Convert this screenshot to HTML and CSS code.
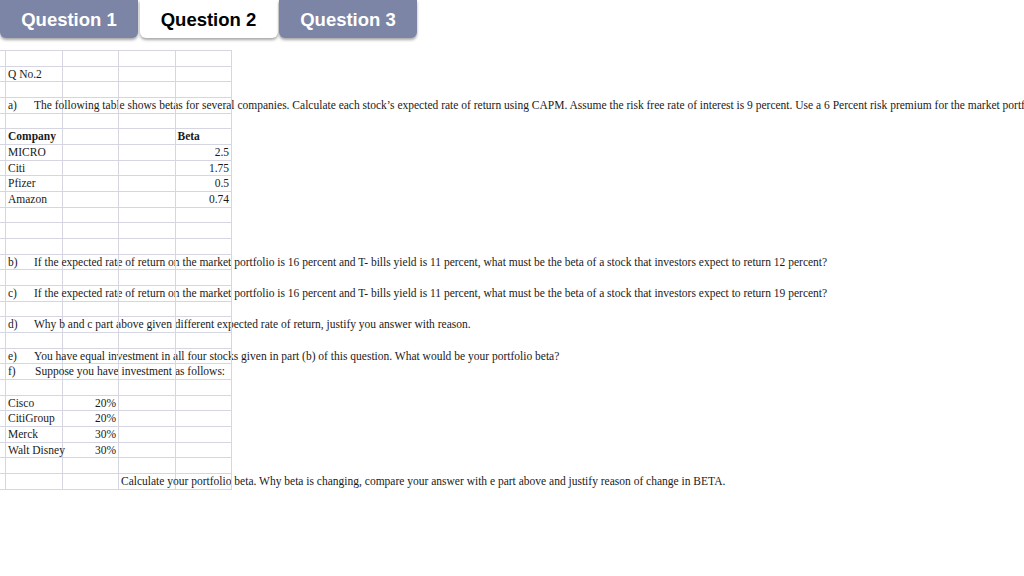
FILE: index.html
```html
<!DOCTYPE html>
<html>
<head>
<meta charset="utf-8">
<link rel="stylesheet" href="styles.css">
</head>
<body>
<div class="tabs">
  <div class="tab">Question 1</div>
  <div class="tab active">Question 2</div>
  <div class="tab">Question 3</div>
</div>
<div class="sheet">
  <div class="row"><div class="c0"></div><div class="c"></div><div class="c"></div><div class="c"></div><div class="c"></div></div>
  <div class="row"><div class="c0"></div><div class="c"><span class="t">Q No.2</span></div><div class="c"></div><div class="c"></div><div class="c"></div></div>
  <div class="row"><div class="c0"></div><div class="c"></div><div class="c"></div><div class="c"></div><div class="c"></div></div>
  <div class="row"><div class="c0"></div><div class="c"><span class="lbl">a)</span><span class="t">The following table shows betas for several companies. Calculate each stock’s expected rate of return using CAPM. Assume the risk free rate of interest is 9 percent. Use a 6 Percent risk premium for the market portfolio.</span></div><div class="c"></div><div class="c"></div><div class="c"></div></div>
  <div class="row"><div class="c0"></div><div class="c"></div><div class="c"></div><div class="c"></div><div class="c"></div></div>
  <div class="row"><div class="c0"></div><div class="c"><span class="t b">Company</span></div><div class="c"></div><div class="c"></div><div class="c"><span class="t b">Beta</span></div></div>
  <div class="row"><div class="c0"></div><div class="c"><span class="t">MICRO</span></div><div class="c"></div><div class="c"></div><div class="c num"><span class="t">2.5</span></div></div>
  <div class="row"><div class="c0"></div><div class="c"><span class="t">Citi</span></div><div class="c"></div><div class="c"></div><div class="c num"><span class="t">1.75</span></div></div>
  <div class="row"><div class="c0"></div><div class="c"><span class="t">Pfizer</span></div><div class="c"></div><div class="c"></div><div class="c num"><span class="t">0.5</span></div></div>
  <div class="row"><div class="c0"></div><div class="c"><span class="t">Amazon</span></div><div class="c"></div><div class="c"></div><div class="c num"><span class="t">0.74</span></div></div>
  <div class="row"><div class="c0"></div><div class="c"></div><div class="c"></div><div class="c"></div><div class="c"></div></div>
  <div class="row"><div class="c0"></div><div class="c"></div><div class="c"></div><div class="c"></div><div class="c"></div></div>
  <div class="row"><div class="c0"></div><div class="c"></div><div class="c"></div><div class="c"></div><div class="c"></div></div>
  <div class="row"><div class="c0"></div><div class="c"><span class="lbl">b)</span><span class="t">If the expected rate of return on the market portfolio is 16 percent and T- bills yield is 11 percent, what must be the beta of a stock that investors expect to return 12 percent?</span></div><div class="c"></div><div class="c"></div><div class="c"></div></div>
  <div class="row"><div class="c0"></div><div class="c"></div><div class="c"></div><div class="c"></div><div class="c"></div></div>
  <div class="row"><div class="c0"></div><div class="c"><span class="lbl">c)</span><span class="t">If the expected rate of return on the market portfolio is 16 percent and T- bills yield is 11 percent, what must be the beta of a stock that investors expect to return 19 percent?</span></div><div class="c"></div><div class="c"></div><div class="c"></div></div>
  <div class="row"><div class="c0"></div><div class="c"></div><div class="c"></div><div class="c"></div><div class="c"></div></div>
  <div class="row"><div class="c0"></div><div class="c"><span class="lbl">d)</span><span class="t">Why b and c part above given different expected rate of return, justify you answer with reason.</span></div><div class="c"></div><div class="c"></div><div class="c"></div></div>
  <div class="row"><div class="c0"></div><div class="c"></div><div class="c"></div><div class="c"></div><div class="c"></div></div>
  <div class="row"><div class="c0"></div><div class="c"><span class="lbl">e)</span><span class="t">You have equal investment in all four stocks given in part (b) of this question. What would be your portfolio beta?</span></div><div class="c"></div><div class="c"></div><div class="c"></div></div>
  <div class="row"><div class="c0"></div><div class="c"><span class="lbl">f)</span><span class="t sp">Suppose you have investment as follows:</span></div><div class="c"></div><div class="c"></div><div class="c"></div></div>
  <div class="row"><div class="c0"></div><div class="c"></div><div class="c"></div><div class="c"></div><div class="c"></div></div>
  <div class="row"><div class="c0"></div><div class="c"><span class="t">Cisco</span></div><div class="c num"><span class="t">20%</span></div><div class="c"></div><div class="c"></div></div>
  <div class="row"><div class="c0"></div><div class="c"><span class="t">CitiGroup</span></div><div class="c num"><span class="t">20%</span></div><div class="c"></div><div class="c"></div></div>
  <div class="row"><div class="c0"></div><div class="c"><span class="t">Merck</span></div><div class="c num"><span class="t">30%</span></div><div class="c"></div><div class="c"></div></div>
  <div class="row"><div class="c0"></div><div class="c"><span class="t">Walt Disney</span></div><div class="c num"><span class="t">30%</span></div><div class="c"></div><div class="c"></div></div>
  <div class="row"><div class="c0"></div><div class="c"></div><div class="c"></div><div class="c"></div><div class="c"></div></div>
  <div class="row"><div class="c0"></div><div class="c"></div><div class="c"></div><div class="c"><span class="t">Calculate your portfolio beta. Why beta is changing, compare your answer with e part above and justify reason of change in BETA.</span></div><div class="c"></div></div>
</div>
</body>
</html>
```
FILE: styles.css
```css
html, body {
  margin: 0;
  padding: 0;
  overflow: hidden;
  background: #ffffff;
}

body {
  width: 1024px;
  height: 576px;
}

.tabs {
  display: flex;
  gap: 1.5px;
  height: 38px;
}

.tab {
  width: 138px;
  height: 38px;
  box-sizing: border-box;
  padding-top: 2px;
  background: #7c85a5;
  color: #ffffff;
  font-family: "Liberation Sans", Arial, sans-serif;
  font-weight: bold;
  font-size: 18.5px;
  line-height: 36px;
  text-align: center;
  border-radius: 0 0 6px 6px;
  box-shadow: 0 2px 3px rgba(0, 0, 0, 0.35);
}

.tab.active {
  background: #ffffff;
  color: #000000;
}

.sheet {
  margin-top: 12px;
  width: 232px;
  border-top: 1px solid #d6d6e2;
  font-family: "Liberation Serif", "Times New Roman", serif;
  font-size: 11.5px;
  color: #1a1a1a;
}

.row {
  display: grid;
  grid-template-columns: 6px repeat(4, 56.5px);
  height: 15.68px;
}

.c0, .c {
  box-sizing: border-box;
  border-right: 1px solid #d6d6e2;
  border-bottom: 1px solid #d6d6e2;
  height: 15.68px;
  white-space: nowrap;
  line-height: 15px;
}

.c {
  padding-left: 2px;
  display: flex;
  align-items: center;
}

.c.num {
  justify-content: flex-end;
  padding-left: 0;
  padding-right: 2px;
}

.lbl {
  display: inline-block;
  width: 26px;
  flex: none;
}

.t {
  flex: none;
}

.t.sp {
  margin-left: 1px;
}

.b {
  font-weight: bold;
}
```
